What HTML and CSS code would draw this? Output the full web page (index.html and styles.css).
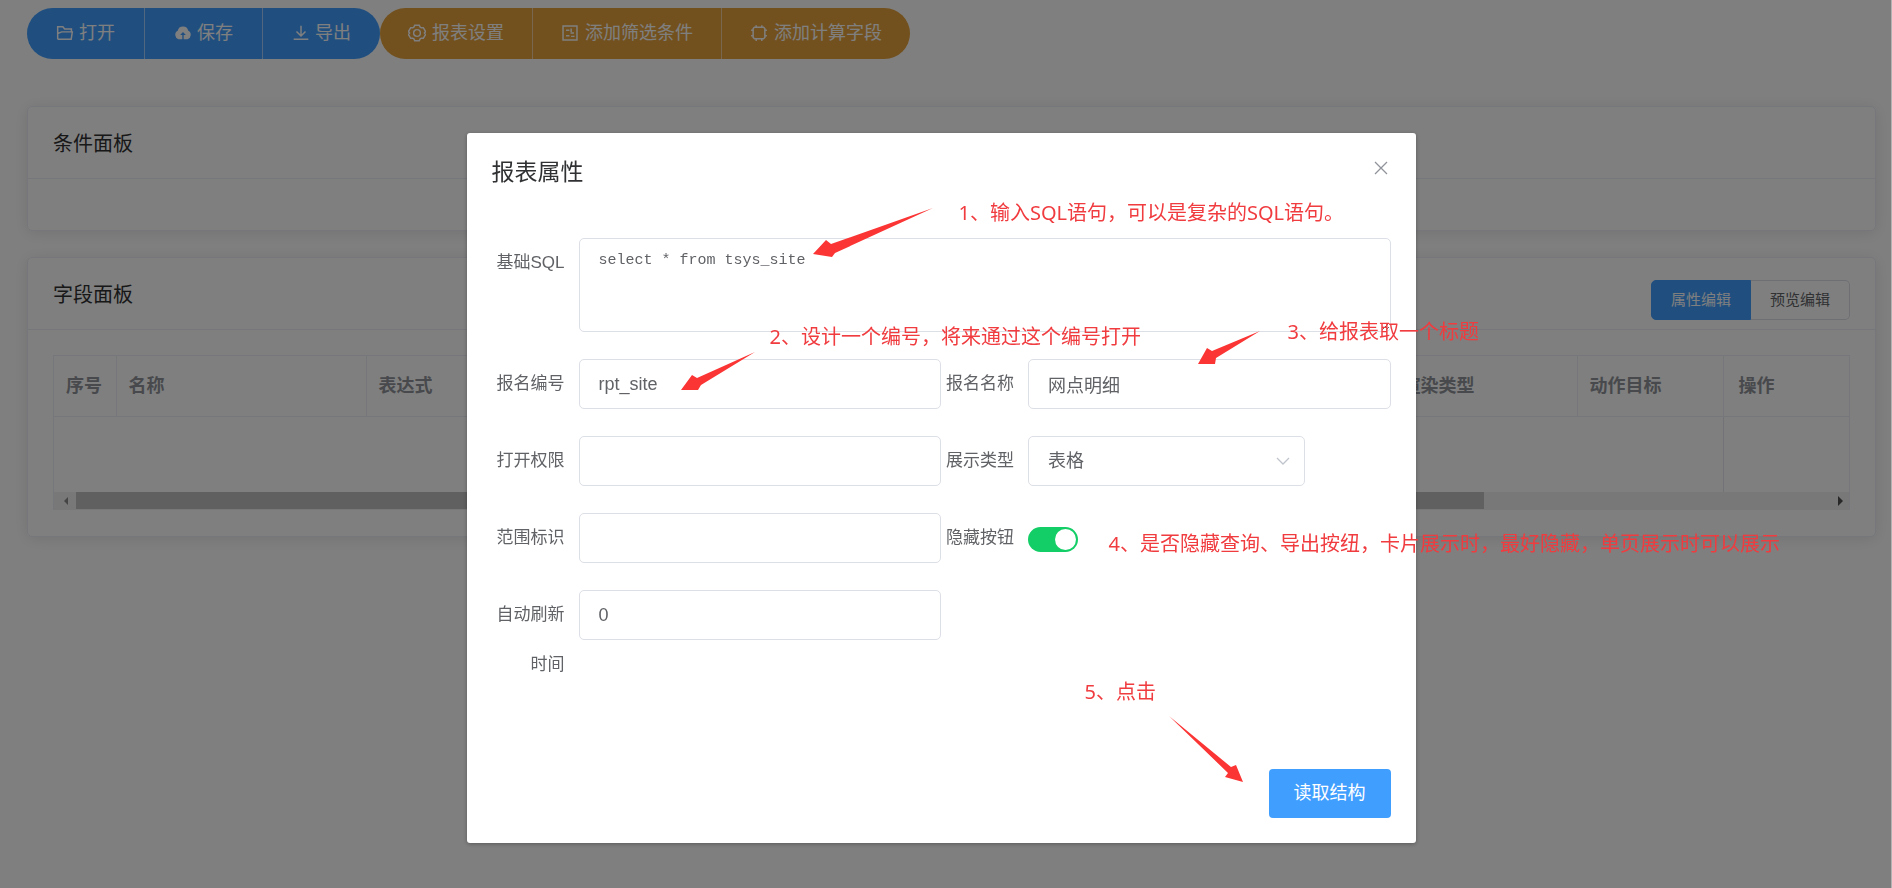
FILE: index.html
```html
<!DOCTYPE html>
<html lang="zh-CN">
<head>
<meta charset="utf-8">
<title>报表属性</title>
<link rel="stylesheet" href="styles.css">
</head>
<body>
<main class="page">
  <nav class="toolbar">
    <div class="btn-group primary">
      <button type="button" class="tool"><svg class="icon" viewBox="0 0 16 16"><path d="M1.500 13.500V2.500h4.600l1.600 2h6v2.500M1.500 13.500h12l1-6.500H5L1.500 8.500"/></svg>打开</button>
      <button type="button" class="tool"><svg class="icon" viewBox="0 0 16 16"><path class="solid" fill-rule="evenodd" d="M4 13.500a4 4 0 0 1-.7-7.400 4.800 4.800 0 0 1 9.400 0 4 4 0 0 1-.7 7.400H8.600V9.800h1.900L8 7 5.500 9.800h1.900v3.700z"/></svg>保存</button>
      <button type="button" class="tool"><svg class="icon" viewBox="0 0 16 16"><path d="M8 1.500v9M4 6.600l4 4 4-4M1.500 13.500h13"/></svg>导出</button>
    </div>
    <div class="btn-group warning">
      <button type="button" class="tool"><svg class="icon" viewBox="0 0 16 16"><path d="M6 1.200h4l.8 1.600 1 .6 1.800-.1 2 3.400-1 1.300 1 1.300-2 3.400-1.800-.1-1 .6-.8 1.600H6l-.8-1.600-1-.6-1.800.1-2-3.400 1-1.300-1-1.300 2-3.400 1.800.1 1-.6z"/><circle cx="8" cy="8" r="3"/></svg>报表设置</button>
      <button type="button" class="tool"><svg class="icon" viewBox="0 0 16 16"><path d="M1.800 1.800h12.400v12.400H1.800zM4.500 5.500h3M4.500 10.500h3M8.500 8h3M9 4v3M9 11h3"/></svg>添加筛选条件</button>
      <button type="button" class="tool"><svg class="icon" viewBox="0 0 16 16"><path d="M4 2.800h8L13.200 4v8L12 13.200H4L2.800 12V4zM5.500 1v1.800M10.500 1v1.800M5.500 13.200V15M10.500 13.200V15M1 5.500h1.800M1 10.500h1.800M13.200 5.500H15M13.200 10.500H15"/></svg>添加计算字段</button>
    </div>
  </nav>

  <section class="card">
    <header class="card-head"><h2 class="card-title">条件面板</h2></header>
    <div class="card-body"></div>
  </section>

  <section class="card">
    <header class="card-head">
      <h2 class="card-title">字段面板</h2>
      <div class="radio-group">
        <label class="radio"><input type="radio" name="mode" checked><span>属性编辑</span></label>
        <label class="radio"><input type="radio" name="mode"><span>预览编辑</span></label>
      </div>
    </header>
    <div class="card-body">
      <div class="grid">
        <table class="fields">
          <colgroup><col class="c-index"><col class="c-name"><col class="c-name"><col><col class="c-render"><col class="c-target"><col class="c-action"></colgroup>
          <thead><tr><th>序号</th><th>名称</th><th>表达式</th><th></th><th>渲染类型</th><th>动作目标</th><th class="fixed">操作</th></tr></thead>
          <tbody><tr><td colspan="6"></td><td class="fixed"></td></tr></tbody>
        </table>
        <div class="scrollbar">
          <svg class="arrow dim" viewBox="0 0 18 18"><path d="M12 5v8L8 9z"/></svg>
          <div class="track"><div class="thumb"></div></div>
          <svg class="arrow" viewBox="0 0 18 18"><path d="M9 4v10l5-5z"/></svg>
        </div>
      </div>
    </div>
  </section>
</main>

<div class="overlay">
  <div class="dialog" role="dialog" aria-labelledby="dialog-title">
    <header class="dialog-head">
      <h1 class="dialog-title" id="dialog-title">报表属性</h1>
      <button type="button" class="close" aria-label="关闭"><svg viewBox="0 0 16 16"><path d="M2 2l12 12M14 2L2 14"/></svg></button>
    </header>
    <form class="form">
      <div class="item wide"><label for="sql">基础SQL</label><textarea id="sql" class="control area" spellcheck="false">select * from tsys_site</textarea></div>
      <div class="item"><label for="code">报名编号</label><input id="code" class="control" type="text" value="rpt_site"></div>
      <div class="item"><label for="name">报名名称</label><input id="name" class="control" type="text" value="网点明细"></div>
      <div class="item"><label for="perm">打开权限</label><input id="perm" class="control" type="text"></div>
      <div class="item"><label for="type">展示类型</label>
        <div class="select-box"><select id="type" class="control"><option>表格</option></select><svg class="chevron" viewBox="0 0 14 14"><path d="M1 4l6 6 6-6"/></svg></div></div>
      <div class="item"><label for="scope">范围标识</label><input id="scope" class="control" type="text"></div>
      <div class="item"><label for="hide">隐藏按钮</label><input id="hide" class="switch" type="checkbox" checked></div>
      <div class="item"><label for="refresh">自动刷新时间</label><input id="refresh" class="control" type="text" value="0"></div>
    </form>
    <footer class="dialog-foot"><button type="button" class="submit">读取结构</button></footer>

    <svg class="arrows" width="949" height="710" viewBox="467 133 949 710">
      <path d="M813 254l13-14 5 4 102-36-98 45-3 4z"/>
      <path d="M681 390l11-15 5 3 58-26-54 33-3 5z"/>
      <path d="M1198 364l9-16 5 3 48-20-44 27-1 6z"/>
      <path d="M1169 716l62 51 5-2 7 17-18-5 3-4z"/>
    </svg>
    <p class="note note-1">1、输入SQL语句，可以是复杂的SQL语句。</p>
    <p class="note note-2">2、设计一个编号，将来通过这个编号打开</p>
    <p class="note note-3">3、给报表取一个标题</p>
    <p class="note note-4">4、是否隐藏查询、导出按纽，卡片展示时，最好隐藏，单页展示时可以展示</p>
    <p class="note note-5">5、点击</p>
  </div>
</div>
</body>
</html>
```
FILE: styles.css
```css
* { box-sizing: border-box; }

body {
  margin: 0;
  background: #fff;
  color: #606266;
  font: 18px/28px "Liberation Sans", "Noto Sans CJK SC", sans-serif;
}

button, input, textarea, select { font: inherit; color: inherit; margin: 0; }
h1, h2, p { margin: 0; font-weight: 400; }

.page { padding: 8px 16px 0 27px; }

/* toolbar */
.toolbar { display: flex; margin-bottom: 47px; }
.btn-group { display: flex; border-radius: 26px; overflow: hidden; }
.primary { background: #409eff; }
.warning { background: #e6a23c; }
.tool {
  display: flex;
  align-items: center;
  gap: 5px;
  height: 51px;
  padding: 0 29px 2px;
  border: 0;
  background: none;
  color: #fff;
  white-space: nowrap;
}
.warning .tool { gap: 6px; padding: 0 28px 2px; }
.tool + .tool { border-left: 1px solid rgba(255, 255, 255, .5); }
.icon { width: 18px; height: 18px; fill: none; stroke: currentColor; stroke-width: 1.3; }
.icon .solid { fill: currentColor; stroke: none; }

/* cards */
.card {
  margin-bottom: 26px;
  border: 1px solid #ebeef5;
  border-radius: 5px;
  box-shadow: 0 2px 15px rgba(0, 0, 0, .1);
}
.card-head {
  display: flex;
  justify-content: space-between;
  align-items: flex-start;
  padding: 23px 25px 20px;
  border-bottom: 1px solid #ebeef5;
}
.card-title { font-size: 20px; line-height: 28px; color: #303133; }
.card-body { padding: 25px 25px 26px; }

.radio-group { display: flex; margin: -1px 0 -14px; }
.radio { position: relative; cursor: pointer; }
.radio input { position: absolute; opacity: 0; }
.radio span {
  display: block;
  padding: 0 19px;
  border: 1px solid #dcdfe6;
  font-size: 15px;
  line-height: 38px;
}
.radio:first-child span { border-radius: 5px 0 0 5px; }
.radio:last-child span { border-left: 0; border-radius: 0 5px 5px 0; }
.radio input:checked + span { background: #409eff; border-color: #409eff; color: #fff; }

/* field table */
.grid { border: 1px solid #ebeef5; border-bottom: 0; }
.fields { width: 100%; table-layout: fixed; border-collapse: collapse; }
.c-index { width: 62px; }
.c-name { width: 250px; }
.c-render { width: 187px; }
.c-target { width: 146px; }
.c-action { width: 126px; }
.fields th {
  height: 60px;
  padding: 0 12px;
  border-right: 1px solid #ebeef5;
  border-bottom: 1px solid #ebeef5;
  color: #909399;
  text-align: left;
  white-space: nowrap;
}
.fields th:last-child { border-right: 0; }
.fields td { height: 76px; padding: 0; }
.fields .fixed { padding-left: 15px; border-left: 1px solid #e4e7ed; }
.scrollbar { display: flex; background: #f1f1f1; }
.arrow { width: 22px; height: 18px; fill: #505050; }
.arrow.dim { fill: #8a8a8a; }
.track { flex: 1; }
.thumb { width: 80.4%; height: 17px; background: #c1c1c1; }

/* dialog */
.overlay {
  position: fixed;
  inset: 0;
  padding: 133px 9px 0 0;
  border-right: 1px solid rgba(255, 255, 255, .4);
  background: rgba(0, 0, 0, .5);
}
.dialog {
  position: relative;
  width: 949px;
  max-width: 100%;
  margin: 0 auto;
  padding: 25px;
  border-radius: 3px;
  background: #fff;
  box-shadow: 0 1px 4px rgba(0, 0, 0, .3);
}
.dialog-head {
  display: flex;
  justify-content: space-between;
  align-items: flex-start;
  margin-bottom: 52px;
}
.dialog-title { font-size: 23px; line-height: 28px; color: #303133; }
.close { display: flex; padding: 2px; border: 0; background: none; }
.close svg { width: 16px; height: 16px; fill: none; stroke: #909399; stroke-width: 1.3; }

.form { display: grid; grid-template-columns: 1fr 1fr; row-gap: 27px; }
.item { display: flex; align-items: flex-start; }
.item label {
  flex: 0 0 87px;
  padding-right: 14px;
  font-size: 17px;
  line-height: 50px;
  text-align: right;
}
.wide { grid-column: 1 / -1; }
.control {
  flex: 1;
  min-width: 0;
  height: 50px;
  padding: 0 19px;
  border: 1px solid #dcdfe6;
  border-radius: 5px;
  background: #fff;
  outline: 0;
}
.area {
  height: 94px;
  padding: 8px 19px;
  font: 15px/27px "Liberation Mono", monospace;
  resize: vertical;
}
.select-box { position: relative; display: flex; width: 277px; }
.select-box .control { appearance: none; }
.chevron {
  position: absolute;
  top: 18px;
  right: 15px;
  width: 14px;
  height: 14px;
  fill: none;
  stroke: #c0c4cc;
  stroke-width: 1.3;
  pointer-events: none;
}
.switch {
  appearance: none;
  display: flex;
  justify-content: flex-end;
  width: 50px;
  height: 25px;
  margin: 14px 0 0;
  padding: 2px;
  border-radius: 13px;
  background: #13ce66;
}
.switch::before { content: ""; width: 21px; height: 21px; border-radius: 50%; background: #fff; }

.dialog-foot { display: flex; justify-content: flex-end; margin-top: 79px; }
.submit {
  height: 49px;
  padding: 0 25px 2px;
  border: 0;
  border-radius: 4px;
  background: #409eff;
  color: #fff;
}

/* hand-placed notes over the dialog */
.arrows { position: absolute; top: 0; left: 0; fill: #fb3434; pointer-events: none; }
.note {
  position: absolute;
  color: #f03b3f;
  font: 20px/28px "Noto Sans", "Noto Sans CJK SC", sans-serif;
  white-space: nowrap;
}
.note-1 { top: 66px; left: 492px; }
.note-2 { top: 190px; left: 303px; }
.note-3 { top: 185px; left: 821px; }
.note-4 { top: 397px; left: 642px; }
.note-5 { top: 545px; left: 618px; }
```
